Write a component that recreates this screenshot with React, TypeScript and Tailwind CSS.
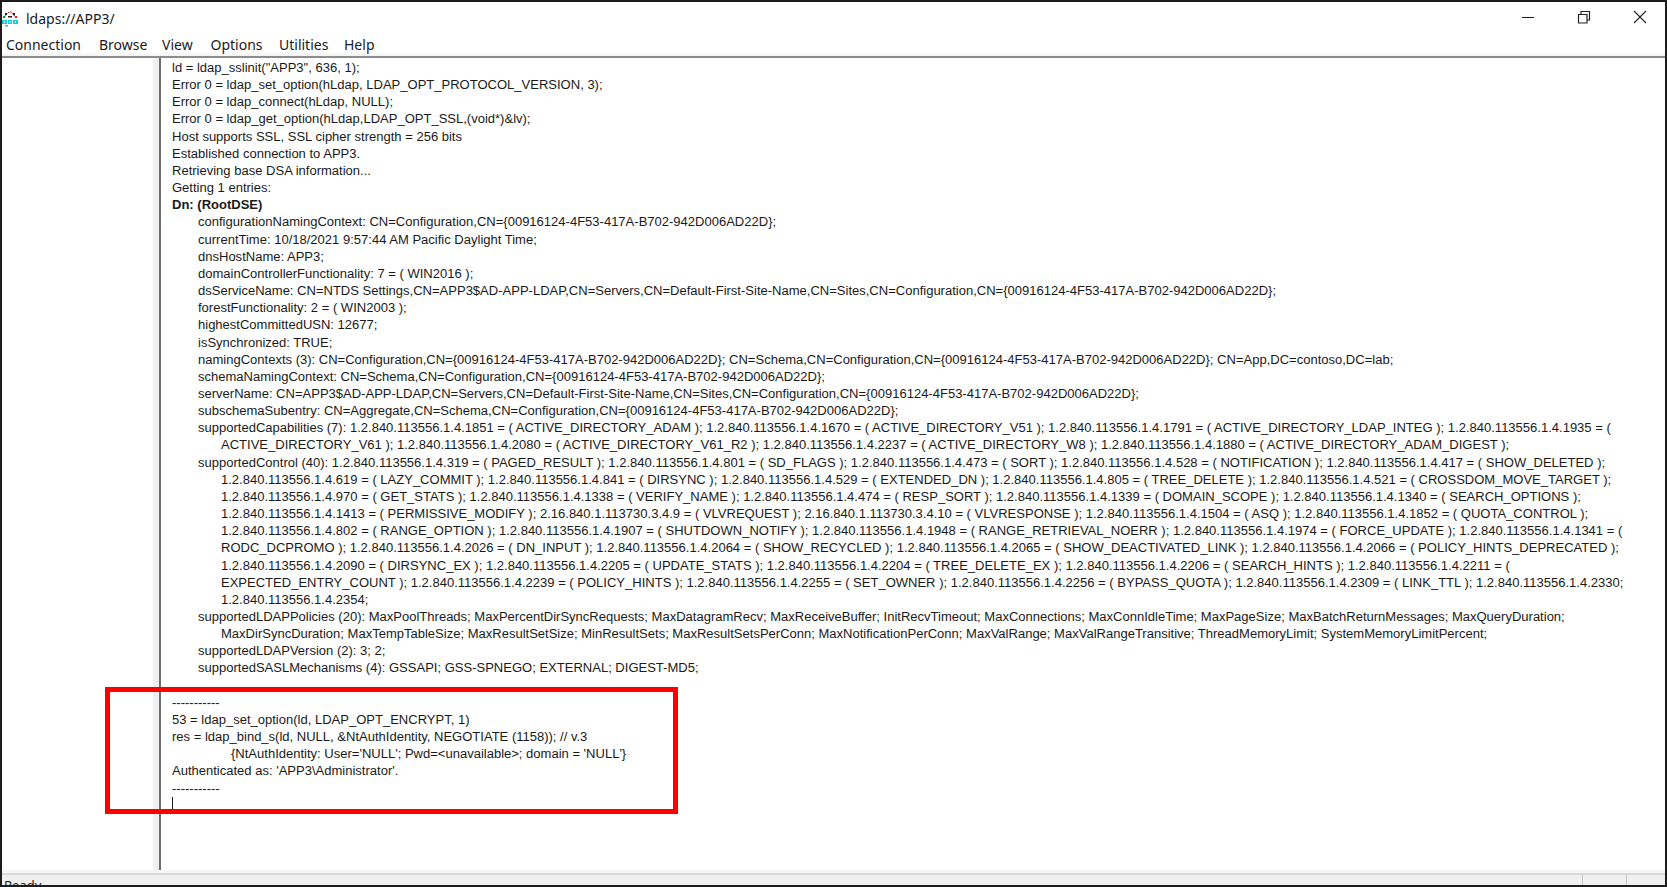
const lines: [number, string, boolean?][] = [
  [0, 'ld = ldap_sslinit("APP3", 636, 1);'],
  [0, 'Error 0 = ldap_set_option(hLdap, LDAP_OPT_PROTOCOL_VERSION, 3);'],
  [0, 'Error 0 = ldap_connect(hLdap, NULL);'],
  [0, 'Error 0 = ldap_get_option(hLdap,LDAP_OPT_SSL,(void*)&lv);'],
  [0, 'Host supports SSL, SSL cipher strength = 256 bits'],
  [0, 'Established connection to APP3.'],
  [0, 'Retrieving base DSA information...'],
  [0, 'Getting 1 entries:'],
  [0, 'Dn: (RootDSE)', true],
  [1, 'configurationNamingContext: CN=Configuration,CN={00916124-4F53-417A-B702-942D006AD22D};'],
  [1, 'currentTime: 10/18/2021 9:57:44 AM Pacific Daylight Time;'],
  [1, 'dnsHostName: APP3;'],
  [1, 'domainControllerFunctionality: 7 = ( WIN2016 );'],
  [1, 'dsServiceName: CN=NTDS Settings,CN=APP3$AD-APP-LDAP,CN=Servers,CN=Default-First-Site-Name,CN=Sites,CN=Configuration,CN={00916124-4F53-417A-B702-942D006AD22D};'],
  [1, 'forestFunctionality: 2 = ( WIN2003 );'],
  [1, 'highestCommittedUSN: 12677;'],
  [1, 'isSynchronized: TRUE;'],
  [1, 'namingContexts (3): CN=Configuration,CN={00916124-4F53-417A-B702-942D006AD22D}; CN=Schema,CN=Configuration,CN={00916124-4F53-417A-B702-942D006AD22D}; CN=App,DC=contoso,DC=lab;'],
  [1, 'schemaNamingContext: CN=Schema,CN=Configuration,CN={00916124-4F53-417A-B702-942D006AD22D};'],
  [1, 'serverName: CN=APP3$AD-APP-LDAP,CN=Servers,CN=Default-First-Site-Name,CN=Sites,CN=Configuration,CN={00916124-4F53-417A-B702-942D006AD22D};'],
  [1, 'subschemaSubentry: CN=Aggregate,CN=Schema,CN=Configuration,CN={00916124-4F53-417A-B702-942D006AD22D};'],
  [1, 'supportedCapabilities (7): 1.2.840.113556.1.4.1851 = ( ACTIVE_DIRECTORY_ADAM ); 1.2.840.113556.1.4.1670 = ( ACTIVE_DIRECTORY_V51 ); 1.2.840.113556.1.4.1791 = ( ACTIVE_DIRECTORY_LDAP_INTEG ); 1.2.840.113556.1.4.1935 = ('],
  [2, 'ACTIVE_DIRECTORY_V61 ); 1.2.840.113556.1.4.2080 = ( ACTIVE_DIRECTORY_V61_R2 ); 1.2.840.113556.1.4.2237 = ( ACTIVE_DIRECTORY_W8 ); 1.2.840.113556.1.4.1880 = ( ACTIVE_DIRECTORY_ADAM_DIGEST );'],
  [1, 'supportedControl (40): 1.2.840.113556.1.4.319 = ( PAGED_RESULT ); 1.2.840.113556.1.4.801 = ( SD_FLAGS ); 1.2.840.113556.1.4.473 = ( SORT ); 1.2.840.113556.1.4.528 = ( NOTIFICATION ); 1.2.840.113556.1.4.417 = ( SHOW_DELETED );'],
  [2, '1.2.840.113556.1.4.619 = ( LAZY_COMMIT ); 1.2.840.113556.1.4.841 = ( DIRSYNC ); 1.2.840.113556.1.4.529 = ( EXTENDED_DN ); 1.2.840.113556.1.4.805 = ( TREE_DELETE ); 1.2.840.113556.1.4.521 = ( CROSSDOM_MOVE_TARGET );'],
  [2, '1.2.840.113556.1.4.970 = ( GET_STATS ); 1.2.840.113556.1.4.1338 = ( VERIFY_NAME ); 1.2.840.113556.1.4.474 = ( RESP_SORT ); 1.2.840.113556.1.4.1339 = ( DOMAIN_SCOPE ); 1.2.840.113556.1.4.1340 = ( SEARCH_OPTIONS );'],
  [2, '1.2.840.113556.1.4.1413 = ( PERMISSIVE_MODIFY ); 2.16.840.1.113730.3.4.9 = ( VLVREQUEST ); 2.16.840.1.113730.3.4.10 = ( VLVRESPONSE ); 1.2.840.113556.1.4.1504 = ( ASQ ); 1.2.840.113556.1.4.1852 = ( QUOTA_CONTROL );'],
  [2, '1.2.840.113556.1.4.802 = ( RANGE_OPTION ); 1.2.840.113556.1.4.1907 = ( SHUTDOWN_NOTIFY ); 1.2.840.113556.1.4.1948 = ( RANGE_RETRIEVAL_NOERR ); 1.2.840.113556.1.4.1974 = ( FORCE_UPDATE ); 1.2.840.113556.1.4.1341 = ('],
  [2, 'RODC_DCPROMO ); 1.2.840.113556.1.4.2026 = ( DN_INPUT ); 1.2.840.113556.1.4.2064 = ( SHOW_RECYCLED ); 1.2.840.113556.1.4.2065 = ( SHOW_DEACTIVATED_LINK ); 1.2.840.113556.1.4.2066 = ( POLICY_HINTS_DEPRECATED );'],
  [2, '1.2.840.113556.1.4.2090 = ( DIRSYNC_EX ); 1.2.840.113556.1.4.2205 = ( UPDATE_STATS ); 1.2.840.113556.1.4.2204 = ( TREE_DELETE_EX ); 1.2.840.113556.1.4.2206 = ( SEARCH_HINTS ); 1.2.840.113556.1.4.2211 = ('],
  [2, 'EXPECTED_ENTRY_COUNT ); 1.2.840.113556.1.4.2239 = ( POLICY_HINTS ); 1.2.840.113556.1.4.2255 = ( SET_OWNER ); 1.2.840.113556.1.4.2256 = ( BYPASS_QUOTA ); 1.2.840.113556.1.4.2309 = ( LINK_TTL ); 1.2.840.113556.1.4.2330;'],
  [2, '1.2.840.113556.1.4.2354;'],
  [1, 'supportedLDAPPolicies (20): MaxPoolThreads; MaxPercentDirSyncRequests; MaxDatagramRecv; MaxReceiveBuffer; InitRecvTimeout; MaxConnections; MaxConnIdleTime; MaxPageSize; MaxBatchReturnMessages; MaxQueryDuration;'],
  [2, 'MaxDirSyncDuration; MaxTempTableSize; MaxResultSetSize; MinResultSets; MaxResultSetsPerConn; MaxNotificationPerConn; MaxValRange; MaxValRangeTransitive; ThreadMemoryLimit; SystemMemoryLimitPercent;'],
  [1, 'supportedLDAPVersion (2): 3; 2;'],
  [1, 'supportedSASLMechanisms (4): GSSAPI; GSS-SPNEGO; EXTERNAL; DIGEST-MD5;'],
  [0, ''],
  [0, '-----------'],
  [0, '53 = ldap_set_option(ld, LDAP_OPT_ENCRYPT, 1)'],
  [0, "res = ldap_bind_s(ld, NULL, &NtAuthIdentity, NEGOTIATE (1158)); // v.3"],
  [3, "{NtAuthIdentity: User='NULL'; Pwd=<unavailable>; domain = 'NULL'}"],
  [0, "Authenticated as: 'APP3\\Administrator'."],
  [0, '-----------'],
]

const menuItems = [
  { label: 'Connection', width: 'w-[93px]' },
  { label: 'Browse', width: 'w-[63px]' },
  { label: 'View', width: 'w-[48.5px]' },
  { label: 'Options', width: 'w-[68.5px]' },
  { label: 'Utilities', width: 'w-[65px]' },
  { label: 'Help', width: 'w-[40px]' },
]

function LdpIcon() {
  return (
    <svg width="16" height="17" viewBox="0 0 16 17" className="shrink-0">
      <path d="M3 6.5L5 3.5l3-2 3 2 2 3" stroke="#c33" strokeWidth="1.2" strokeDasharray="1.5 1" fill="none" />
      <rect x="3" y="3" width="2" height="2" fill="#222" />
      <rect x="11" y="3" width="2" height="2" fill="#222" />
      <rect x="1" y="6" width="2" height="2" fill="#2a8a2a" />
      <rect x="13" y="6" width="2" height="2" fill="#c22" />
      <rect x="6" y="6" width="4" height="1.5" fill="#222" />
      <rect x="0" y="10" width="5" height="4" fill="#13d0d8" />
      <rect x="6" y="10" width="4" height="4" fill="#13d0d8" />
      <rect x="11" y="10" width="5" height="4" fill="#13d0d8" />
      <rect x="2" y="11" width="1" height="2" fill="#fff" />
      <rect x="7.5" y="11" width="1" height="2" fill="#fff" />
      <rect x="13" y="11" width="1" height="2" fill="#fff" />
      <rect x="3" y="15" width="3" height="1.5" fill="#13d0d8" />
    </svg>
  )
}

export default function App() {
  const indents = ['pl-0', 'pl-[26px]', 'pl-[49px]', 'pl-[59px]']

  return (
    <div className="w-[1667px] h-[887px] flex flex-col overflow-hidden bg-white border-2 border-[#1c1c1c] text-[#1a1a1a] relative font-['Liberation_Sans',Arial,sans-serif]">
      {/* Title bar */}
      <div className="h-[32px] shrink-0 flex items-center font-['Noto_Sans',sans-serif] text-[14px]">
        <LdpIcon />
        <span className="ml-[8px]">ldaps://APP3/</span>
        <div className="ml-auto mb-[2px] flex items-center">
          <svg width="14" height="14" viewBox="0 0 14 14" className="mr-[42px]">
            <path d="M1 7.5h12" stroke="#222" strokeWidth="1" fill="none" />
          </svg>
          <svg width="14" height="14" viewBox="0 0 14 14" className="mr-[42px]">
            <path d="M1.5 4.5h8.5v8.5h-8.5zM4 4.5V1.5h8.5v8.5H10" stroke="#222" strokeWidth="1.2" fill="none" />
          </svg>
          <svg width="14" height="14" viewBox="0 0 14 14" className="mr-[18px]">
            <path d="M1 1l12 12M13 1L1 13" stroke="#222" strokeWidth="1.1" fill="none" />
          </svg>
        </div>
      </div>

      {/* Menu */}
      <div className="h-[24px] shrink-0 flex items-center pl-[4px] pb-[2px] font-['Noto_Sans',sans-serif] text-[14px] border-b-2 border-[#8c8c8c] bg-gradient-to-b from-white from-80% to-[#f2f2f2]">
        {menuItems.map((item) => (
          <span key={item.label} className={`${item.width} shrink-0`}>
            {item.label}
          </span>
        ))}
      </div>

      {/* Panes */}
      <div className="flex-1 min-h-0 flex">
        <div className="w-[151px] shrink-0 bg-white" />
        <div className="w-[6px] shrink-0 bg-[#f0f0f0]" />
        <div className="flex-1 min-w-0 border-l-2 border-[#6e6e6e] pl-[11px] pt-[1px] text-[13.03px] leading-[17.17px] overflow-hidden">
          {lines.map(([indent, text, bold], i) => (
            <div key={i} className={`h-[17.17px] whitespace-nowrap ${indents[indent]} ${bold ? 'font-bold' : ''}`}>
              {text}
            </div>
          ))}
          <div className="w-px h-[16px] bg-[#1a1a1a]" />
        </div>
      </div>
      <div className="h-[3px] shrink-0 bg-[#f6f6f6]" />

      {/* Status bar */}
      <div className="h-[12px] shrink-0 bg-[#f0f0f0] border-t-2 border-[#d8d8d8] flex overflow-hidden font-['Noto_Sans',sans-serif] text-[13px] leading-[16px]">
        <span className="flex-1 pt-[2px] pl-[2px]">Ready</span>
        <span className="w-[44px] border-l border-[#c4c4c4]" />
        <span className="w-[39px] border-l border-[#c4c4c4]" />
      </div>

      {/* Red annotation box */}
      <div className="absolute left-[103px] top-[685px] w-[573px] h-[127px] border-[5px] border-[#fe0000]" />
    </div>
  )
}
